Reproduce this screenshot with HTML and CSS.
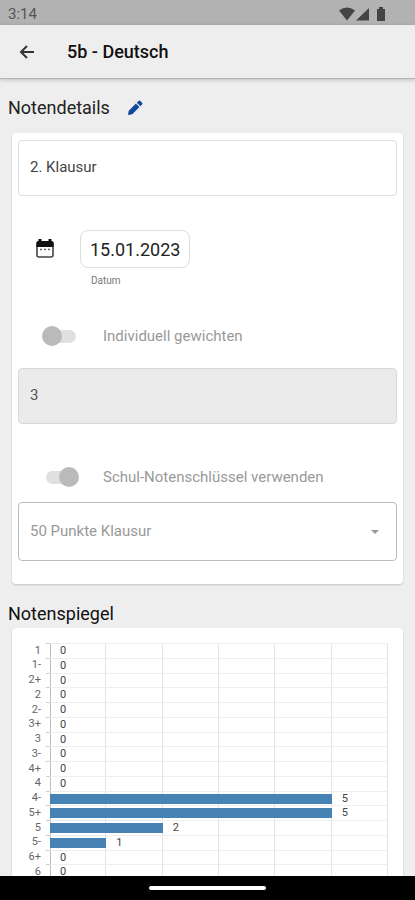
FILE: index.html
```html
<!DOCTYPE html>
<html lang="de">
<head>
<meta charset="utf-8">
<meta name="viewport" content="width=device-width, initial-scale=1">
<title>5b - Deutsch</title>
<link rel="stylesheet" href="styles.css">
</head>
<body>
<div class="status">
  <span>3:14</span>
  <svg class="status-icons" viewBox="0 0 48 16" aria-hidden="true">
    <path d="M0 4.500Q8-1.500 16 4.500L8 14.500Z"/>
    <path d="M17 14.500L30 2V14.500Z"/>
    <path d="M38 3h2V1h4v2h2v12h-8Z"/>
  </svg>
</div>
<header class="appbar">
  <button class="icon-button" type="button" aria-label="Zurück">
    <svg class="back" viewBox="0 0 16 16" aria-hidden="true"><path d="M15 8H2M8 2L2 8l6 6"/></svg>
  </button>
  <h1>5b - Deutsch</h1>
</header>
<main>
  <div class="heading">
    <h2>Notendetails</h2>
    <button class="icon-button" type="button" aria-label="Bearbeiten">
      <svg class="pencil" viewBox="0 0 18 18" aria-hidden="true"><path d="M1 17l1-5 8-8 4 4-8 8ZM11 3l2-2q1-1 2 0l2 2q1 1 0 2l-2 2Z"/></svg>
    </button>
  </div>
  <form class="card details">
    <input class="field" type="text" aria-label="Bezeichnung" value="2. Klausur">
    <div class="date-row">
      <svg class="calendar" viewBox="0 0 18 20" aria-hidden="true">
        <rect x="1" y="3" width="16" height="15" rx="2" fill="#fff" stroke="#444" stroke-width="1.600"/>
        <path d="M0.500 4q0-2 2-2V0h3v2h7V0h3v2q2 0 2 2v4h-17Z" fill="#111"/>
        <path d="M4 10.500h10" stroke="#666" stroke-width="1.500" stroke-dasharray="2 2"/>
      </svg>
      <div class="date-box">
        <button class="date" id="date" type="button">15.01.2023</button>
        <label for="date">Datum</label>
      </div>
    </div>
    <label class="toggle weight"><input type="checkbox" disabled><span>Individuell gewichten</span></label>
    <input class="field" type="text" aria-label="Gewichtung" value="3" disabled>
    <label class="toggle key"><input type="checkbox" checked disabled><span>Schul-Notenschlüssel verwenden</span></label>
    <div class="select">
      <select aria-label="Notenschlüssel" disabled><option>50 Punkte Klausur</option></select>
    </div>
  </form>
  <div class="heading second"><h2>Notenspiegel</h2></div>
  <section class="card chart-card" aria-label="Notenspiegel">
    <ul class="chart">
      <li><span class="grade">1</span><div class="plot"><span>0</span></div></li>
      <li><span class="grade">1-</span><div class="plot"><span>0</span></div></li>
      <li><span class="grade">2+</span><div class="plot"><span>0</span></div></li>
      <li><span class="grade">2</span><div class="plot"><span>0</span></div></li>
      <li><span class="grade">2-</span><div class="plot"><span>0</span></div></li>
      <li><span class="grade">3+</span><div class="plot"><span>0</span></div></li>
      <li><span class="grade">3</span><div class="plot"><span>0</span></div></li>
      <li><span class="grade">3-</span><div class="plot"><span>0</span></div></li>
      <li><span class="grade">4+</span><div class="plot"><span>0</span></div></li>
      <li><span class="grade">4</span><div class="plot"><span>0</span></div></li>
      <li><span class="grade">4-</span><div class="plot"><i class="bar" style="width:83.333%"></i><span>5</span></div></li>
      <li><span class="grade">5+</span><div class="plot"><i class="bar" style="width:83.333%"></i><span>5</span></div></li>
      <li><span class="grade">5</span><div class="plot"><i class="bar" style="width:33.333%"></i><span>2</span></div></li>
      <li><span class="grade">5-</span><div class="plot"><i class="bar" style="width:16.667%"></i><span>1</span></div></li>
      <li><span class="grade">6+</span><div class="plot"><span>0</span></div></li>
      <li><span class="grade">6</span><div class="plot"><span>0</span></div></li>
    </ul>
  </section>
</main>
<footer class="navbar"><div class="pill"></div></footer>
</body>
</html>
```
FILE: styles.css
```css
* { box-sizing: border-box; }

body {
  margin: 0;
  height: 100vh;
  display: flex;
  flex-direction: column;
  background: #eee;
  color: #222;
  font-family: Roboto, "Liberation Sans", sans-serif;
  font-size: 15px;
}

button, input, select { font: inherit; color: inherit; }

.status {
  flex: none;
  height: 25px;
  padding: 2px 28px 0 8px;
  display: flex;
  align-items: center;
  justify-content: space-between;
  background: #b2b2b2;
  color: #555;
}

.status-icons { width: 48px; height: 16px; fill: #444; }

.appbar {
  flex: none;
  height: 54px;
  padding-left: 18px;
  display: flex;
  align-items: center;
  gap: 31px;
  border-bottom: 1px solid #b4b4b4;
  box-shadow: 0 1px 4px rgba(0, 0, 0, .2);
}

h1 { margin: 0; font-size: 18px; font-weight: 500; color: #111; }
h2 { margin: 0; font-size: 18px; font-weight: 400; }

.icon-button {
  display: flex;
  padding: 0;
  border: 0;
  background: none;
}

.back { width: 16px; height: 16px; margin: 0 1px; fill: none; stroke: #333; stroke-width: 2; }
.pencil { width: 16px; height: 16px; fill: #114a9c; }

main {
  flex: 1;
  min-height: 0;
  overflow: hidden;
}

.heading {
  height: 54px;
  padding: 3px 8px 0;
  display: flex;
  align-items: center;
  gap: 17px;
}

.second { height: 44px; padding-top: 14px; color: #111; }

.card {
  margin: 0 12px;
  border-radius: 4px;
  background: #fff;
  box-shadow: 0 1px 2px rgba(0, 0, 0, .18);
}

.details { padding: 7px 6px 23px; }

.field {
  display: block;
  width: 100%;
  height: 56px;
  padding: 0 11px 2px;
  border: 1px solid #ddd;
  border-radius: 4px;
  background: #fff;
  color: #444;
}

.field:disabled { background: #ebebeb; border-color: #d8d8d8; color: #555; }

.date-row {
  display: flex;
  gap: 26px;
  padding: 34px 0 0 18px;
}

.calendar { width: 18px; height: 20px; margin-top: 9px; }
.date-box { display: flex; flex-direction: column; }

.date {
  height: 38px;
  padding: 0 9px;
  border: 1px solid #ddd;
  border-radius: 8px;
  background: #fff;
  color: #222;
  font-size: 18px;
}

.date-box label { padding: 7px 11px 0; font-size: 10px; line-height: 12px; color: #777; }

.toggle {
  height: 20px;
  padding-left: 24px;
  display: flex;
  align-items: center;
  gap: 27px;
  color: #999;
}

.weight { margin: 39px 0 22px; }
.key { margin: 43px 0 15px; }

.toggle input {
  appearance: none;
  position: relative;
  width: 34px;
  height: 20px;
  margin: 0;
}

.toggle input::before {
  content: "";
  position: absolute;
  inset: 4px 0 3px 2px;
  border-radius: 8px;
  background: #e0e0e0;
}

.toggle input::after {
  content: "";
  position: absolute;
  left: 0;
  top: 0;
  width: 20px;
  height: 20px;
  border-radius: 50%;
  background: #bababa;
}

.toggle input:checked::before { inset: 4px -1px 3px 4px; }
.toggle input:checked::after { left: 17px; }

.select { position: relative; }

.select select {
  appearance: none;
  display: block;
  width: 100%;
  height: 59px;
  padding: 0 11px 2px;
  border: 1px solid #bbb;
  border-radius: 4px;
  background: #fff;
  color: #999;
  opacity: 1;
}

.select::after {
  content: "";
  position: absolute;
  right: 18px;
  top: 28px;
  border: 4px solid transparent;
  border-top-color: #999;
  border-bottom: 0;
}

.chart-card { padding: 15px 15px 16px 6px; }

.chart {
  height: 236px;
  margin: 0;
  padding: 0;
  display: grid;
  grid-template-rows: repeat(16, 1fr);
  list-style: none;
  font-size: 11px;
  line-height: 14px;
  color: #666;
}

.chart li { display: grid; grid-template-columns: 32px 1fr; min-height: 0; }

.grade {
  padding-right: 9px;
  display: flex;
  align-items: center;
  justify-content: flex-end;
  background: linear-gradient(#ccc, #ccc) right top / 4px 1px no-repeat;
}

.plot {
  display: flex;
  align-items: center;
  gap: 10px;
  border-top: 1px solid #eee;
  box-shadow: inset 1px 0 #bbb, inset -1px 0 #e4e4e4;
  background: repeating-linear-gradient(to right, transparent 0 calc(100% / 6 - 1px), #e4e4e4 calc(100% / 6 - 1px) calc(100% / 6));
}

.bar { flex: none; height: 10px; background: #4682b4; }
.plot span:first-child { margin-left: 10px; }
.plot span { color: #444; }

.navbar {
  flex: none;
  height: 24px;
  display: flex;
  align-items: center;
  justify-content: center;
  background: #000;
}

.pill { width: 28%; height: 4px; border-radius: 2px; background: #fff; }
```
